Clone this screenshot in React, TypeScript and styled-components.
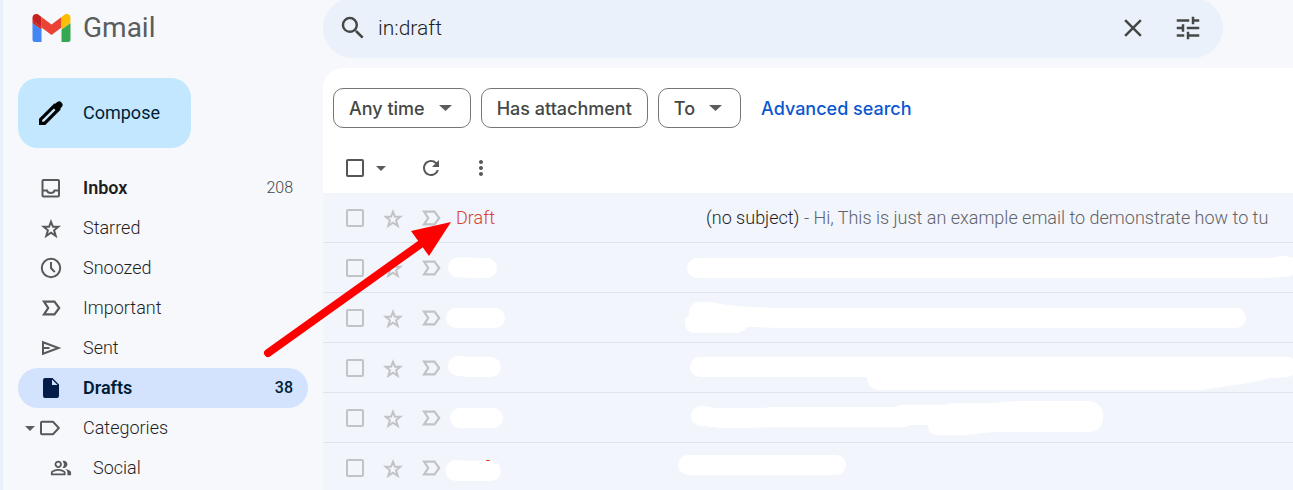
import React from "react";
import styled, { createGlobalStyle } from "styled-components";
import { MdClose, MdMoreVert, MdOutlinePeopleAlt, MdRefresh, MdSearch, MdTune } from "react-icons/md";

const GlobalStyle = createGlobalStyle`
  *, *::before, *::after { box-sizing: border-box; }
  body {
    margin: 0;
    background: #f6f8fc;
    font-family: Roboto, "Liberation Sans", sans-serif;
    font-weight: 350;
    color: #1f1f1f;
  }
  button, input { font: inherit; color: inherit; }
  svg { display: block; flex: none; }
`;

const Page = styled.div`
  position: relative;
  display: grid;
  grid-template-columns: 320px minmax(0, 1fr);
  height: 100vh;
  overflow: hidden;
  border-left: 3px solid #e9f0fb;
`;

const Sidebar = styled.aside`
  padding-right: 15px;
`;

const Brand = styled.a`
  display: flex;
  align-items: center;
  gap: 12px;
  height: 56px;
  padding-left: 29px;
  font-size: 28px;
  font-weight: 400;
  line-height: 32px;
  color: #5a5c5f;
  text-decoration: none;
`;

const Compose = styled.button`
  display: flex;
  align-items: center;
  gap: 20px;
  min-width: 173px;
  height: 70px;
  margin: 22px 0 20px 15px;
  padding: 0 30px 0 21px;
  border: 0;
  border-radius: 20px;
  background: #c2e7ff;
  color: #001d35;
  font-size: 18px;
  line-height: 24px;
  font-weight: 400;
`;

const Nav = styled.nav`
  display: flex;
  flex-direction: column;
  padding-left: 15px;
`;

const NavItem = styled.a<{ $active?: boolean; $bold?: boolean; $nested?: boolean }>`
  display: flex;
  align-items: center;
  height: 40px;
  padding-right: 15px;
  padding-left: ${(p) => (p.$nested ? 10 : 0)}px;
  border-radius: 20px;
  background: ${(p) => (p.$active ? "#d3e3fd" : "transparent")};
  color: ${(p) => (p.$active ? "#001d35" : "#1f1f1f")};
  font-size: 18px;
  line-height: 24px;
  font-weight: ${(p) => (p.$bold || p.$active ? 600 : 350)};
  text-decoration: none;
`;

const NavExpand = styled.span`
  display: flex;
  justify-content: flex-end;
  width: 17px;
  color: #444746;
`;

const NavIcon = styled.span<{ $active?: boolean }>`
  display: flex;
  justify-content: center;
  width: 32px;
  margin-right: 16px;
  color: ${(p) => (p.$active ? "#041e49" : "#575a59")};
`;

const NavLabel = styled.span`
  flex: 1;
`;

const NavCount = styled.span<{ $active?: boolean }>`
  font-size: 16px;
  font-weight: ${(p) => (p.$active ? 500 : 350)};
  color: ${(p) => (p.$active ? "#001d35" : "#444746")};
`;

const Main = styled.main`
  display: flex;
  flex-direction: column;
  min-width: 0;
`;

const Header = styled.header`
  display: flex;
  align-items: flex-end;
  flex: none;
  height: 68px;
  padding: 0 70px 10px 0;
  overflow: hidden;
`;

const SearchBar = styled.form`
  display: flex;
  align-items: center;
  flex: 1;
  max-width: 900px;
  height: 60px;
  padding: 0 20px 0 15px;
  border-radius: 30px;
  background: #eaf1fb;
  color: #444746;
`;

const SearchInput = styled.input`
  flex: 1;
  min-width: 0;
  margin-left: 10px;
  padding: 0;
  border: 0;
  outline: 0;
  background: transparent;
  color: #1f1f1f;
  font-size: 21px;
  line-height: 28px;
`;

const IconButton = styled.button<{ $tone?: string }>`
  display: flex;
  align-items: center;
  justify-content: center;
  padding: 0;
  border: 0;
  background: transparent;
  color: ${(p) => p.$tone ?? "#444746"};
`;

const SearchActions = styled.div`
  display: flex;
  gap: 25px;
`;

const Panel = styled.section`
  flex: 1;
  min-height: 0;
  overflow: hidden;
  border-top-left-radius: 20px;
  background: #fff;
`;

const Filters = styled.div`
  display: flex;
  align-items: center;
  gap: 10px;
  padding: 20px 10px 15px;
`;

const Chip = styled.button<{ $menu?: boolean }>`
  display: flex;
  align-items: center;
  gap: 14px;
  height: 40px;
  padding: 0 ${(p) => (p.$menu ? 18 : 15)}px 0 15px;
  border: 1px solid #747775;
  border-radius: 10px;
  background: #fff;
  color: #444746;
  font-family: Inter, Roboto, sans-serif;
  font-size: 18px;
  font-weight: 450;
  white-space: nowrap;
`;

const AdvancedLink = styled.a`
  margin-left: 10px;
  color: #0b57d0;
  font-family: Inter, Roboto, sans-serif;
  font-size: 18px;
  font-weight: 450;
  text-decoration: none;
  white-space: nowrap;
`;

const Toolbar = styled.div`
  display: flex;
  align-items: center;
  height: 50px;
  padding-left: 23px;
`;

const SelectMenu = styled.div`
  display: flex;
  align-items: center;
  gap: 12px;
  margin-right: 33px;
`;

const ToolGroup = styled.div`
  display: flex;
  gap: 26px;
`;

const Checkbox = styled.input<{ $dark?: boolean }>`
  appearance: none;
  display: block;
  width: 18px;
  height: 18px;
  margin: 0;
  border: 2px solid ${(p) => (p.$dark ? "#535655" : "#c1c3c7")};
  border-radius: 2px;
  background: transparent;
`;

const MailTable = styled.table`
  width: 100%;
  table-layout: fixed;
  border-collapse: separate;
  border-spacing: 0;
  font-size: 18px;
  line-height: 24px;
`;

const MailRow = styled.tr`
  background: #f2f5fc;
`;

const Cell = styled.td<{ $pad?: number }>`
  height: 50px;
  padding: 0 0 0 ${(p) => p.$pad ?? 0}px;
  border-bottom: 1px solid #dce4ec;
  overflow: hidden;
  white-space: nowrap;
`;

const Sender = styled.span`
  color: #d93f2d;
`;

const Snippet = styled.span`
  color: #5f6368;
`;

const Redaction = styled.svg`
  fill: #fff;
`;

const Pointer = styled.svg`
  position: absolute;
  top: 0;
  left: -3px;
  pointer-events: none;
`;

const Caret = ({ width, height }: { width: number; height: number }) => (
  <svg width={width} height={height} viewBox="0 0 10 5" preserveAspectRatio="none" fill="#5a5d5f" aria-hidden="true">
    <path d="M0 0h10L5 5z" />
  </svg>
);

const GmailLogo = () => (
  <svg width="39" height="28" viewBox="0 0 38 28" aria-hidden="true">
    <path d="M0 9l9 6.500V28H2.500A2.500 2.500 0 0 1 0 25.500z" fill="#4285f4" />
    <path d="M38 9l-9 6.500V28h6.500a2.500 2.500 0 0 0 2.500-2.500z" fill="#34a853" />
    <path d="M9 3l10 7.500L29 3v10.500L19 21 9 13.500z" fill="#ea4335" />
    <path d="M0 6.500V4C0 .2 4-1.300 7 1.500L9 3v10.500z" fill="#c5221f" />
    <path d="M0 6.500l9 7v2L0 9z" fill="#c5221f" />
    <path d="M38 6.500V4C38 .2 34-1.300 31 1.500L29 3v10.500z" fill="#fbbc04" />
    <path d="M38 6.500l-9 7v2L38 9z" fill="#fbbc04" />
  </svg>
);

const PencilIcon = () => (
  <svg width="24" height="24" viewBox="0 0 24 24" aria-hidden="true">
    <path d="M1.600 22.400v-4L15.500 4.500l4 4L5.600 22.400z" fill="none" stroke="#000" strokeWidth="3.200" />
    <path d="M13 5.500L18.200 1.100q2.200-1.800 4.300.3 2.100 2.100.4 4.400L18.500 11z" />
  </svg>
);

const Line = ({ children, size = 22 }: { children: React.ReactNode; size?: number }) => (
  <svg width={size} height={size} viewBox="0 0 22 22" fill="none" stroke="currentColor" strokeWidth="2" aria-hidden="true">
    {children}
  </svg>
);

const InboxIcon = () => (
  <Line>
    <rect x="2.500" y="3" width="16.500" height="16.500" rx="1" />
    <path d="M2.500 13.500h4.500c.8 3.300 6.700 3.300 7.500 0h4.500" />
  </Line>
);

const StarIcon = () => (
  <Line>
    <path d="M11 4.800l2 5h5.300l-4.200 3.500 1.600 5.500-4.700-3.200-4.700 3.200 1.600-5.500-4.200-3.500H9z" strokeWidth="2" />
  </Line>
);

const ClockIcon = () => (
  <Line>
    <circle cx="11" cy="11" r="9.200" />
    <path d="M11 5v6l3.800 4.200" />
  </Line>
);

const ImportantIcon = () => (
  <Line>
    <path d="M4 4.700h10.500l4.700 6.300-4.700 6.300H4L8.200 11z" strokeWidth="2.200" />
  </Line>
);

const SentIcon = () => (
  <Line>
    <path d="M3 5.200L18.500 11 3 16.800z" />
    <path d="M3 11h6.500" />
  </Line>
);

const FileIcon = () => (
  <svg width="16" height="20" viewBox="0 0 16 20" fill="currentColor" aria-hidden="true">
    <path d="M2 0h7.500L16 6.500V18a2 2 0 0 1-2 2H2a2 2 0 0 1-2-2V2a2 2 0 0 1 2-2zm7 1.500V7h5.500z" fillRule="evenodd" />
  </svg>
);

const LabelIcon = () => (
  <Line>
    <path d="M2 4.700h11l5.800 6.300-5.800 6.300H2q-1 0-1-1V5.700q0-1 1-1z" />
  </Line>
);

type NavEntry = {
  label: string;
  icon: React.ReactNode;
  count?: string;
  active?: boolean;
  bold?: boolean;
  nested?: boolean;
  expandable?: boolean;
};

const navEntries: NavEntry[] = [
  { label: "Inbox", icon: <InboxIcon />, count: "208", bold: true },
  { label: "Starred", icon: <StarIcon /> },
  { label: "Snoozed", icon: <ClockIcon /> },
  { label: "Important", icon: <ImportantIcon /> },
  { label: "Sent", icon: <SentIcon /> },
  { label: "Drafts", icon: <FileIcon />, count: "38", active: true },
  { label: "Categories", icon: <LabelIcon />, expandable: true },
  { label: "Social", icon: <MdOutlinePeopleAlt size={22} />, nested: true },
];

/* Hand-brushed strokes that hide the sender and subject of each mail. */
const redactedMails = [
  {
    sender: "M13 14.500C20 14 24 15 30 15H42a10 10 0 0 1 0 20H28C22 35 18 34.500 13 34.500a10 10 0 0 1 0-20z",
    subject:
      "M20 15H594C600 14 601 13 604 13C610 13 611 14 614 14C619 15 621 20 619 25C617 32 614 34 608 34H604C600 34 596 35 592 35H20a10 10 0 0 1 0-20z",
  },
  {
    sender: "M11 15H50a10 10 0 0 1 0 20H11a10 10 0 0 1 0-20z",
    subject:
      "M22 9H30C40 9 45 12 60 13C75 14.500 88 14 93 15H559a10 10 0 0 1 0 20H98C90 34.500 80 34 70 34C66 38 64 40 58 40H18a10 10 0 0 1-6-18C11 14 16 9 22 9z",
  },
  {
    sender: "M13 13C18 13 20 14 24 14H46a10 10 0 0 1 0 20H26C20 34 18 33 13 33a10 10 0 0 1 0-20z",
    subject:
      "M23 14H610a10 10 0 0 1 0 20C604 35 598 35 592 35C570 42 550 42 545 44C535 45 530 46 526 47H201C194 46 190 41 190 34H23a10 10 0 0 1 0-20z",
  },
  {
    sender: "M15 15H48a10 10 0 0 1 0 20H15a10 10 0 0 1 0-20z",
    subject:
      "M24 13C30 13 35 15 43 15H80C90 15 90 14 98 14H215C220 14 220 12 226 12H263C270 12 270 10 278 10H320C330 8 340 8 350 8H412C420 8 426 15 426 22V26C426 33 420 39 412 39H330C310 39 305 40 298 41Q290 42 286 42H261C254 42 251 38 251 32H233C229 34 228 34 220 34H98C80 35 60 35 43 35C35 34 30 33 24 33a10 10 0 0 1 0-20z",
  },
  {
    sender: "M11 17C16 17 20 18 24 18H46a10 10 0 0 1 0 20H11a10 10 0 0 1 0-21z",
    subject: "M11 12H159a10 10 0 0 1 0 20H11a10 10 0 0 1 0-20z",
    trace: true,
  },
];

const RowTools = ({ name }: { name: string }) => (
  <>
    <Cell $pad={23}>
      <Checkbox type="checkbox" aria-label={`Select ${name}`} />
    </Cell>
    <Cell>
      <IconButton type="button" $tone="#c1c3c7" aria-label={`Star ${name}`}>
        <StarIcon />
      </IconButton>
    </Cell>
    <Cell>
      <IconButton type="button" $tone="#c1c3c7" aria-label={`Mark ${name} as important`}>
        <ImportantIcon />
      </IconButton>
    </Cell>
  </>
);

export default function App() {
  return (
    <>
      <GlobalStyle />
      <Page>
        <Sidebar>
          <Brand href="#inbox">
            <GmailLogo />
            Gmail
          </Brand>
          <Compose type="button">
            <PencilIcon />
            Compose
          </Compose>
          <Nav aria-label="Mailboxes">
            {navEntries.map((item) => (
              <NavItem
                key={item.label}
                href={`#${item.label.toLowerCase()}`}
                $active={item.active}
                $bold={item.bold}
                $nested={item.nested}
                aria-current={item.active ? "page" : undefined}
              >
                <NavExpand>{item.expandable && <Caret width={10} height={5} />}</NavExpand>
                <NavIcon $active={item.active}>{item.icon}</NavIcon>
                <NavLabel>{item.label}</NavLabel>
                {item.count && <NavCount $active={item.active}>{item.count}</NavCount>}
              </NavItem>
            ))}
          </Nav>
        </Sidebar>

        <Main>
          <Header>
            <SearchBar role="search">
              <IconButton type="button" aria-label="Search">
                <MdSearch size={30} />
              </IconButton>
              <SearchInput type="text" aria-label="Search mail" defaultValue="in:draft" />
              <SearchActions>
                <IconButton type="button" aria-label="Clear search">
                  <MdClose size={30} />
                </IconButton>
                <IconButton type="button" aria-label="Show search options">
                  <MdTune size={30} />
                </IconButton>
              </SearchActions>
            </SearchBar>
          </Header>

          <Panel>
            <Filters>
              <Chip type="button" $menu>
                Any time
                <Caret width={13} height={6} />
              </Chip>
              <Chip type="button">Has attachment</Chip>
              <Chip type="button" $menu>
                To
                <Caret width={13} height={6} />
              </Chip>
              <AdvancedLink href="#advanced-search">Advanced search</AdvancedLink>
            </Filters>

            <Toolbar>
              <SelectMenu>
                <Checkbox type="checkbox" $dark aria-label="Select all" />
                <IconButton type="button" aria-label="Selection options">
                  <Caret width={10} height={5} />
                </IconButton>
              </SelectMenu>
              <ToolGroup>
                <IconButton type="button" $tone="#575a59" aria-label="Refresh">
                  <MdRefresh size={24} />
                </IconButton>
                <IconButton type="button" $tone="#575a59" aria-label="More">
                  <MdMoreVert size={24} />
                </IconButton>
              </ToolGroup>
            </Toolbar>

            <MailTable aria-label="Drafts">
              <colgroup>
                <col width="59" />
                <col width="38" />
                <col width="25" />
                <col width="232" />
                <col />
              </colgroup>
              <tbody>
                <MailRow>
                  <RowTools name="draft 1" />
                  <Cell $pad={11}>
                    <Sender>Draft</Sender>
                  </Cell>
                  <Cell $pad={29}>
                    (no subject) <Snippet>- Hi, This is just an example email to demonstrate how to tu</Snippet>
                  </Cell>
                </MailRow>
                {redactedMails.map((mail, i) => (
                  <MailRow key={i}>
                    <RowTools name={`draft ${i + 2}`} />
                    <Cell>
                      <Redaction width="70" height="49" aria-hidden="true">
                        <path d={mail.sender} />
                        {mail.trace && <path d="M41 17h4v1h-4z" fill="#e0483a" />}
                      </Redaction>
                    </Cell>
                    <Cell>
                      <Redaction width="620" height="49" aria-hidden="true">
                        <path d={mail.subject} />
                      </Redaction>
                    </Cell>
                  </MailRow>
                ))}
              </tbody>
            </MailTable>
          </Panel>
        </Main>

        <Pointer width="460" height="365" aria-hidden="true">
          <path d="M268 353L422 243" stroke="#f00" strokeWidth="8" strokeLinecap="round" />
          <path d="M451 222L411 231L429 256z" fill="#f00" />
        </Pointer>
      </Page>
    </>
  );
}
